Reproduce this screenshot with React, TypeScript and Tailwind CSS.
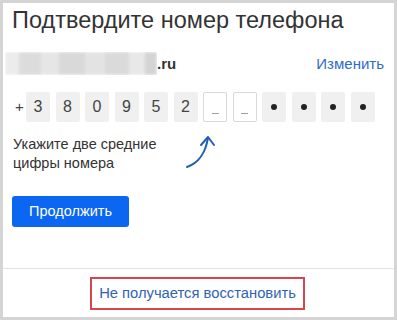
import React from "react";

const digits = ["3", "8", "0", "9", "5", "2", "_", "_", "•", "•", "•", "•"];

function DigitBox({ value }: { value: string }) {
  if (value === "_") {
    return (
      <div className="w-[24px] h-[30px] rounded-[2px] border border-[#d9d9d9] bg-white flex items-end justify-center pb-[7px]">
        <div className="w-[7px] h-px bg-[#a0a0a0]" />
      </div>
    );
  }
  if (value === "•") {
    return (
      <div className="w-[24px] h-[30px] rounded-[2px] bg-[#f0f0f0] flex items-center justify-center">
        <div className="w-[6px] h-[6px] rounded-full bg-[#222]" />
      </div>
    );
  }
  return (
    <div className="w-[24px] h-[30px] rounded-[2px] bg-[#f0f0f0] flex items-center justify-center text-[16px] text-[#444]">
      {value}
    </div>
  );
}

export default function App() {
  return (
    <div
      className="w-[397px] h-[320px] bg-white border-[3px] border-[#d5d5d5] flex flex-col"
      style={{ fontFamily: '"Liberation Sans", Arial, sans-serif' }}
    >
      <div className="flex-1 flex flex-col pl-[9px] pr-[10px] pt-[3px]">
        <h1 className="text-[23.5px] leading-[28px] text-[#333]">Подтвердите номер телефона</h1>

        {/* email row */}
        <div className="mt-[18px] -ml-[7px] flex items-center h-[23px]">
          <div className="relative w-[152px] h-[23px] overflow-hidden">
            <div className="absolute inset-0 flex blur-[1.5px]">
              <div className="w-[14px] bg-[#ececec]" />
              <div className="w-[22px] bg-[#dcdcdc]" />
              <div className="w-[18px] bg-[#e6e6e6]" />
              <div className="w-[26px] bg-[#d9d9d9]" />
              <div className="w-[20px] bg-[#e3e3e3]" />
              <div className="w-[24px] bg-[#dadada]" />
              <div className="w-[16px] bg-[#e8e8e8]" />
              <div className="w-[12px] bg-[#d4d4d4]" />
            </div>
          </div>
          <span className="text-[15px] font-bold text-[#333] leading-none">.ru</span>
          <span className="ml-auto text-[15px] text-[#2f6bc7] leading-none">Изменить</span>
        </div>

        {/* digits row */}
        <div className="mt-[17px] flex items-center">
          <span className="w-[11px] ml-[3px] text-[15px] text-[#444]">+</span>
          <div className="flex gap-[5.5px]">
            {digits.map((d, i) => (
              <DigitBox key={i} value={d} />
            ))}
          </div>
        </div>

        {/* hint */}
        <div className="mt-[13px] flex items-start">
          <p className="w-[171px] ml-[1px] text-[14.5px] leading-[19px] text-[#333]">
            Укажите две средние
            <br />
            цифры номера
          </p>
          <svg width="34" height="36" viewBox="0 0 34 36" className="mt-[-1px]" fill="none">
            <path d="M3 33 C 14 29, 21 21, 24 4" stroke="#1f5fb8" strokeWidth="2" strokeLinecap="round" />
            <path d="M17 11 L24 3 L30 11" stroke="#1f5fb8" strokeWidth="2" strokeLinecap="round" strokeLinejoin="round" />
          </svg>
        </div>

        <button className="mt-[23px] w-[117px] h-[31px] rounded-[3px] bg-[#0b66f2] text-white text-[14.5px]">
          Продолжить
        </button>
      </div>

      <div className="border-t border-[#e2e2e2] h-[49px] flex items-start justify-center pt-[8px]">
        <div className="mr-[2px] w-[215px] h-[33px] border-2 border-[#d8454f] flex items-center justify-center text-[14.75px] text-[#2f63b3] whitespace-nowrap">
          Не получается восстановить
        </div>
      </div>
    </div>
  );
}
